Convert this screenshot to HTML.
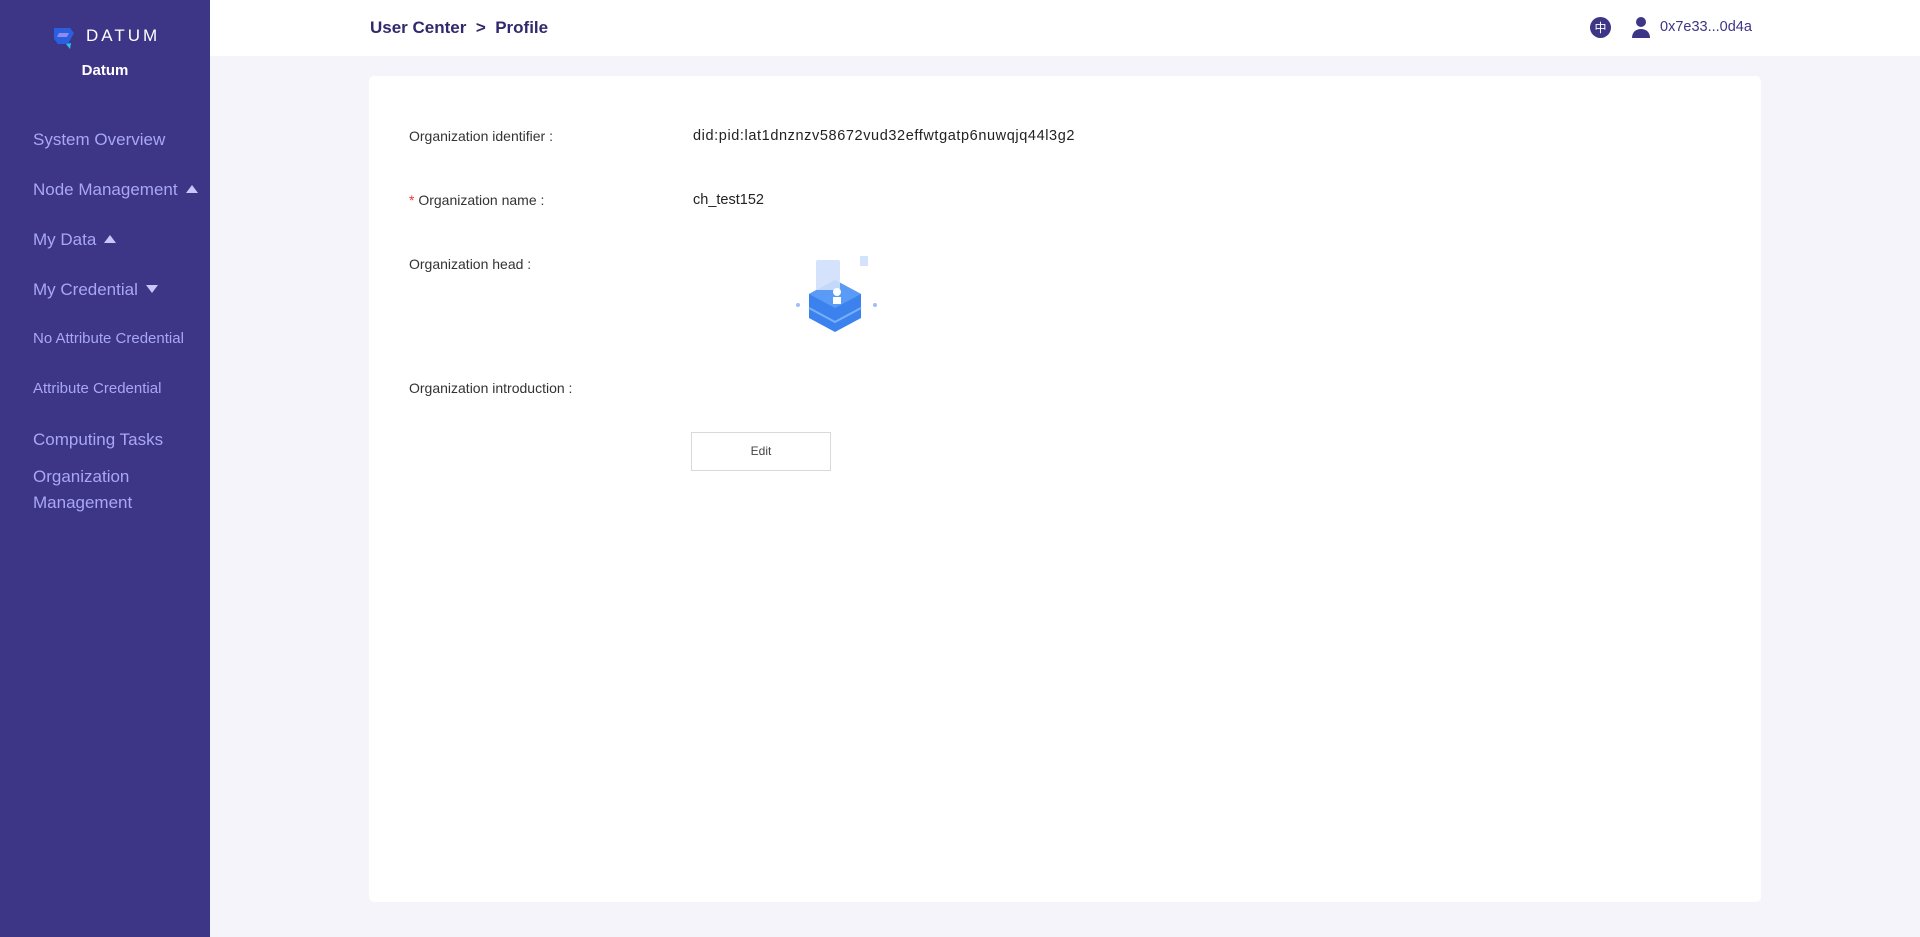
<!DOCTYPE html>
<html><head><meta charset="utf-8"><style>
*{margin:0;padding:0;box-sizing:border-box}
body{width:1920px;height:937px;background:#f4f4fa;font-family:"Liberation Sans",sans-serif;position:relative;overflow:hidden}
.side{position:absolute;left:0;top:0;width:210px;height:937px;background:#3d3586}
.logo{position:absolute;left:50px;top:22px;display:flex;align-items:center}
.logo span{color:#fff;font-size:17px;letter-spacing:3px;margin-left:8px}
.brand{position:absolute;left:0;width:210px;top:62px;text-align:center;color:#fff;font-weight:bold;font-size:15px}
.mi{position:absolute;left:33px;color:#a9a6f8;font-size:17px;line-height:26px}
.mi.s{font-size:15px}
.tri{display:inline-block;width:0;height:0;border-left:6px solid transparent;border-right:6px solid transparent;margin-left:8px;vertical-align:2px}
.up{border-bottom:8px solid #c8c6fb}.dn{border-top:8px solid #c8c6fb}
.hdr{position:absolute;left:210px;top:0;right:0;height:56px;background:#fff}
.bc{position:absolute;left:370px;top:18px;font-size:17px;color:#2f2a6b;font-weight:bold}
.zh{position:absolute;left:1590px;top:17px;width:21px;height:21px;border-radius:50%;background:#3d3586;color:#fff;font-size:12px;text-align:center;line-height:21px;font-family:"Noto Sans CJK SC",sans-serif}
.addr{position:absolute;left:1660px;top:19px;font-size:14.5px;color:#3d3586}
.card{position:absolute;left:369px;top:76px;width:1392px;height:826px;background:#fff;border-radius:5px}
.lb{position:absolute;left:409px;font-size:14px;color:#333}
.v{position:absolute;left:693px;font-size:14.5px;color:#222}
.btn{position:absolute;left:691px;top:432px;width:140px;height:39px;border:1px solid #d9d9d9;background:#fff;font-size:12px;color:#444;text-align:center;line-height:37px}
</style></head><body>
<div class="side">
 <div class="logo"><svg width="28" height="28" viewBox="0 0 28 28"><path d="M4 6h16l4 5-6 11H8l-4-5z" fill="#2a5fe0"/><path d="M9 11h10l-2 4H7z" fill="#8f8af0"/><path d="M16 22l4 5 1-6z" fill="#2ec4f0"/></svg><span>DATUM</span></div>
 <div class="brand">Datum</div>
 <div class="mi" style="top:127px">System Overview</div>
 <div class="mi" style="top:177px">Node Management<span class="tri up"></span></div>
 <div class="mi" style="top:227px">My Data<span class="tri up"></span></div>
 <div class="mi" style="top:277px">My Credential<span class="tri dn"></span></div>
 <div class="mi s" style="top:326px">No Attribute Credential</div>
 <div class="mi s" style="top:376px">Attribute Credential</div>
 <div class="mi" style="top:427px">Computing Tasks</div>
 <div class="mi" style="top:464px">Organization<br>Management</div>
</div>
<div class="hdr"></div>
<div class="bc">User Center &nbsp;&gt;&nbsp; Profile</div>
<div class="zh">中</div>
<svg style="position:absolute;left:1631px;top:16px" width="20" height="22" viewBox="0 0 20 22"><circle cx="10" cy="6" r="5" fill="#3d3586"/><path d="M1 22c0-6 4-9 9-9s9 3 9 9z" fill="#3d3586"/></svg>
<div class="addr">0x7e33...0d4a</div>
<div class="card"></div>
<div class="lb" style="top:128px">Organization identifier :</div>
<div class="v" style="top:128px;letter-spacing:0.6px">did:pid:lat1dnznzv58672vud32effwtgatp6nuwqjq44l3g2</div>
<div class="lb" style="top:192px"><span style="color:#e33">* </span>Organization name :</div>
<div class="v" style="top:192px">ch_test152</div>
<div class="lb" style="top:256px">Organization head :</div>
<div class="lb" style="top:380px">Organization introduction :</div>
<svg style="position:absolute;left:790px;top:252px" width="90" height="86" viewBox="0 0 90 86">
<path d="M45 28l26 14v24L45 80 19 66V42z" fill="#3b82ee"/>
<path d="M45 28l26 14-26 14-26-14z" fill="#5a9bf5"/>
<path d="M19 56l26 14 26-14" stroke="#7ab0f8" stroke-width="2" fill="none"/>
<rect x="26" y="8" width="24" height="30" rx="2" fill="#cfe0fb" opacity=".9"/>
<circle cx="47" cy="40" r="4" fill="#fff"/><path d="M43 52v-7h8v7z" fill="#fff"/>
<rect x="70" y="4" width="8" height="10" fill="#d4e3fb"/>
<circle cx="85" cy="53" r="2" fill="#9cc0f5"/><circle cx="8" cy="53" r="2" fill="#9cc0f5"/>
</svg>
<div class="btn">Edit</div>
</body></html>
